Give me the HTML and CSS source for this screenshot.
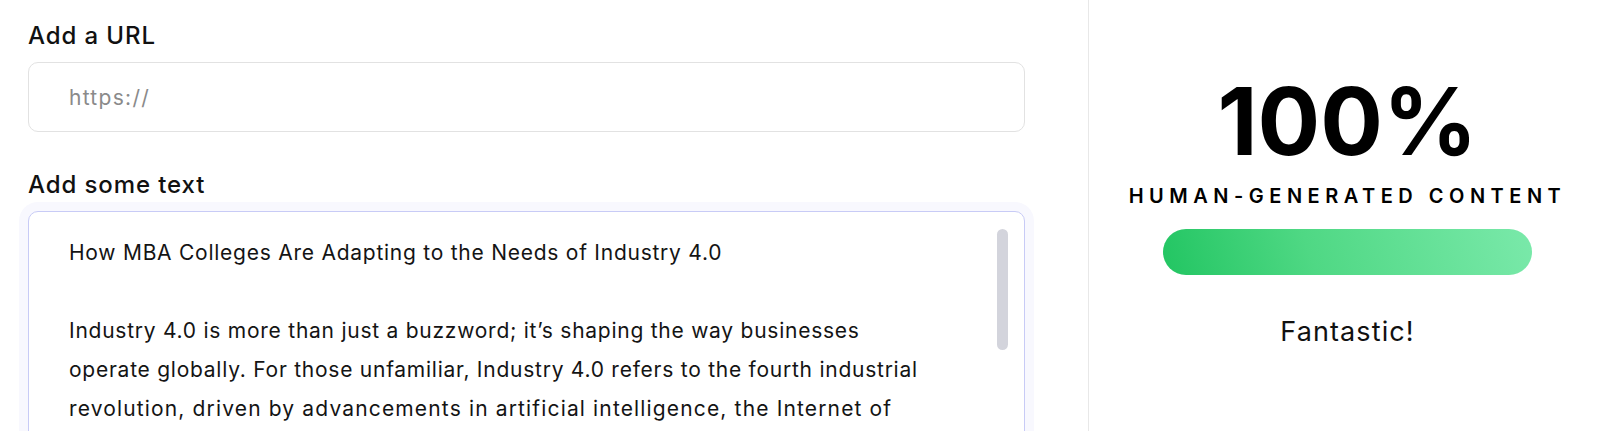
FILE: index.html
```html
<!DOCTYPE html>
<html lang="en">
<head>
<meta charset="utf-8">
<title>Content detector</title>
<link rel="stylesheet" href="styles.css">
</head>
<body>
<div class="page">
  <section class="editor">
    <div class="label">Add a URL</div>
    <div class="field url">
      <span class="placeholder">https://</span>
    </div>
    <div class="label label-text">Add some text</div>
    <div class="field textarea">
      <div class="text">
        <p class="line">How MBA Colleges Are Adapting to the Needs of Industry 4.0</p>
        <p class="line blank">&nbsp;</p>
        <p class="line">Industry 4.0 is more than just a buzzword; it’s shaping the way businesses</p>
        <p class="line">operate globally. For those unfamiliar, Industry 4.0 refers to the fourth industrial</p>
        <p class="line wide">revolution, driven by advancements in artificial intelligence, the Internet of</p>
      </div>
      <div class="scrollbar"></div>
    </div>
  </section>
  <aside class="result">
    <div class="score">100%</div>
    <div class="verdict">HUMAN-GENERATED CONTENT</div>
    <div class="meter"></div>
    <div class="remark">Fantastic!</div>
  </aside>
</div>
</body>
</html>
```

FILE: styles.css
```css
html, body {
  margin: 0;
  padding: 0;
  background: #ffffff;
  height: 431px;
  overflow: hidden;
}

body {
  font-family: "Inter", "DejaVu Sans", sans-serif;
  color: #111111;
}

.page {
  display: flex;
  height: 431px;
  overflow: hidden;
}

.editor {
  width: 1089px;
  flex-shrink: 0;
  box-sizing: border-box;
  padding: 21px 63px 0 28px;
  border-right: 1.5px solid #e8e8e8;
  display: flex;
  flex-direction: column;
  overflow: hidden;
}

.label {
  flex-shrink: 0;
  font-size: 24px;
  line-height: 30px;
  font-weight: 500;
  letter-spacing: 0.9px;
  color: #111111;
}

.label-text {
  margin-top: 38px;
}

.field {
  flex-shrink: 0;
  box-sizing: border-box;
  border: 1px solid #e2e2e2;
  border-radius: 10px;
  background: #ffffff;
  margin-top: 11px;
}

.url {
  height: 70px;
  display: flex;
  align-items: center;
  padding-left: 40px;
}

.placeholder {
  font-size: 21px;
  letter-spacing: 1.3px;
  color: #8a8a8a;
}

.textarea {
  position: relative;
  height: 300px;
  border: 1.5px solid #c8cbf6;
  box-shadow: 0 0 0 9px #f8f8fe;
  padding: 21px 60px 0 40px;
  overflow: hidden;
}

.text {
  font-size: 21px;
  line-height: 39px;
  letter-spacing: 0.75px;
  color: #141414;
}

.line {
  margin: 0;
  white-space: nowrap;
}

.wide {
  letter-spacing: 1.15px;
}

.scrollbar {
  position: absolute;
  top: 17px;
  right: 16px;
  width: 11px;
  height: 121px;
  border-radius: 6px;
  background: #d3d4dc;
}

.result {
  flex: 1;
  display: flex;
  flex-direction: column;
  align-items: center;
  padding-top: 75px;
  padding-left: 6px;
}

.score {
  font-size: 93px;
  line-height: 92px;
  font-weight: 700;
  letter-spacing: 0;
  color: #000000;
}

.verdict {
  margin-top: 17px;
  font-size: 20px;
  line-height: 24px;
  font-weight: 600;
  letter-spacing: 5.5px;
  color: #000000;
}

.meter {
  margin-top: 21px;
  width: 369px;
  height: 46px;
  border-radius: 23px;
  background: linear-gradient(72deg, #22c562 0%, #4fd884 40%, #7ae9aa 100%);
}

.remark {
  margin-top: 41px;
  font-size: 27px;
  line-height: 32px;
  font-weight: 400;
  letter-spacing: 1.1px;
  color: #111111;
}
```
